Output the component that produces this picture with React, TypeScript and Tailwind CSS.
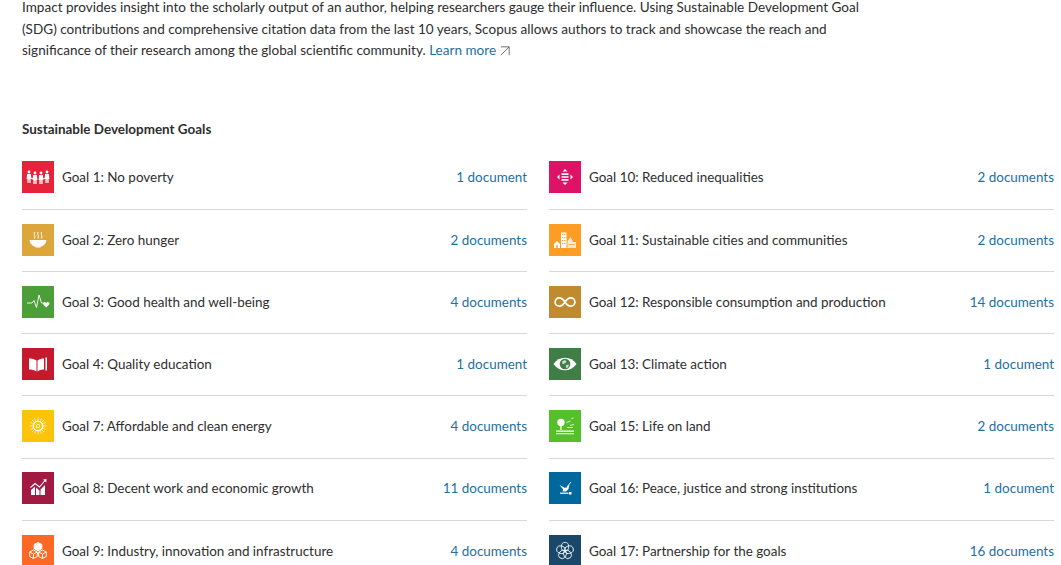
import { FC, ReactNode } from 'react';

const W = 'white';

const Figure: FC<{ x: number; top: number }> = ({ x, top }) => (
  <g>
    <circle cx={x} cy={top} r={1.400} />
    <path d={`M${x - 1.900} ${top + 2}h3.800l.5 5h-.8v4h-1.300v-3.500h-.6v3.500h-1.300v-4h-.8z`} />
  </g>
);

const Poverty = () => (
  <g fill={W}>
    <Figure x={7} top={11} />
    <Figure x={13} top={12} />
    <Figure x={19} top={12} />
    <Figure x={25} top={11} />
    <circle cx={10} cy={17.500} r={0.800} />
    <circle cx={22} cy={17.500} r={0.800} />
  </g>
);

const Hunger = () => (
  <g>
    <path d="M7.500 16h17c-.3 3.800-3.500 6.300-6 6.700v.8h-5v-.8c-2.500-.4-5.700-2.900-6-6.700z" fill={W} />
    <path d="M12.500 8c-1.200 1.600 1.200 3 0 6.500M16 8c-1.200 1.600 1.200 3 0 6.500M19.500 8c-1.200 1.600 1.200 3 0 6.500" stroke={W} strokeWidth={1} fill="none" />
  </g>
);

const Health = () => (
  <g>
    <path d="M5 17h5l2-2.500 2.500 7 2.500-12.500 2.500 8h1.500" stroke={W} strokeWidth={0.900} fill="none" />
    <path d="M24.200 21.500l-3-3c-1.300-1.800 1.700-3.800 3-1.500 1.300-2.300 4.300-.3 3 1.500z" fill={W} />
  </g>
);

const Education = () => (
  <g fill={W}>
    <path d="M7 10.500c2.500 0 5 .6 7.500 2v11c-2.500-1.400-5-2-7.500-2z" />
    <path d="M22 10.500c-2 0-4.500.6-6.500 2v11c2-1.400 4.500-2 6.500-2z" />
    <rect x={23.500} y={9.500} width={1.500} height={13} />
  </g>
);

const Energy = () => (
  <g stroke={W} fill="none">
    <circle cx={16} cy={16} r={4.700} strokeWidth={1.500} />
    <circle cx={16} cy={16} r={1.700} strokeWidth={0.800} />
    <path
      d="M16 7.500v2.800M16 21.700v2.800M7.500 16h2.800M21.700 16h2.800M10 10l2 2M20 20l2 2M22 10l-2 2M12 20l-2 2M12.500 8.300l1 2.300M18.500 21.400l1 2.300M19.500 8.300l-1 2.300M13.500 21.400l-1 2.300M8.300 12.500l2.300 1M21.400 18.500l2.300 1M23.700 12.500l-2.300 1M10.600 18.500l-2.300 1"
      strokeWidth={0.700}
    />
  </g>
);

const Growth = () => (
  <g fill={W}>
    <path d="M9 18l4-3.500v8.500H9zM14 15.500l3.500 3V23H14zM18.500 17.500l4.500-4.500v10h-4.500z" />
    <path d="M8.500 15.500l4.500-4 4.500 3.500 5.500-6.500" stroke={W} strokeWidth={1.100} fill="none" />
    <path d="M21 7.500l3.500-.5-.2 3.500z" />
  </g>
);

const Industry = () => (
  <g stroke={W} strokeWidth={1} fill="none" strokeLinejoin="round">
    <path d="M16 7.500l3.800 2v4.200l-3.800 2-3.800-2V9.500z" fill={W} />
    <path d="M11.500 15l3.800 2v4.500l-3.800 2-3.800-2V17z" />
    <path d="M20.500 15l3.800 2v4.500l-3.800 2-3.800-2V17z" />
    <path d="M7.700 17l3.800 2 3.800-2M16.700 17l3.800 2 3.800-2M11.500 19v4.500M20.500 19v4.500" />
  </g>
);

const Inequalities = () => (
  <g fill={W}>
    <path d="M12.500 12.300h7v1.700h-7zM12.500 15.150h7v1.700h-7zM12.500 18h7v1.700h-7z" />
    <path d="M16 8l2.500 2.500h-5zM16 24l-2.500-2.500h5zM8 16l2.500-2.500v5zM24 16l-2.500-2.500v5z" />
  </g>
);

const Cities = () => (
  <g fill={W}>
    <path d="M5 24v-4l3-3 3 3v4zM12 24V8.500h5.500V24z" />
    <path d="M18.500 24v-7l3-4 2 3.500v1.500h3.500v6z" opacity={0.8} />
    <g fill="#fd9d24">
      <rect x={13.200} y={10} width={1.200} height={1.200} />
      <rect x={15.200} y={10} width={1.200} height={1.200} />
      <rect x={13.200} y={13} width={1.200} height={1.200} />
      <rect x={15.200} y={13} width={1.200} height={1.200} />
      <rect x={13.200} y={16} width={1.200} height={1.200} />
      <rect x={15.200} y={16} width={1.200} height={1.200} />
      <rect x={13.200} y={19} width={1.200} height={1.200} />
      <rect x={15.200} y={19} width={1.200} height={1.200} />
      <rect x={19.500} y={20} width={6.500} height={0.700} />
      <rect x={7.300} y={21} width={1.400} height={3} />
    </g>
  </g>
);

const Consumption = () => (
  <path
    d="M16 16c-1.800-2.800-3.500-4.200-5.700-4.200a4.200 4.200 0 0 0 0 8.400c2.200 0 3.900-1.400 5.700-4.200 1.800-2.800 3.500-4.200 5.700-4.200a4.200 4.200 0 0 1 0 8.400c-2.200 0-3.900-1.400-5.700-4.200z"
    stroke={W}
    strokeWidth={1.700}
    fill="none"
  />
);

const Climate = () => (
  <g>
    <path d="M4.500 16c3-4.200 7-6.300 11.500-6.300S24.500 11.800 27.500 16c-3 4.200-7 6.300-11.500 6.300S7.500 20.200 4.500 16z" fill={W} />
    <circle cx={16} cy={16} r={5.300} fill="#3f7e44" />
    <path d="M13 13.500l3-1.500 1.500 1.500-1.500 2-2.500.5zM17 17l3-.5-1 3-2 .5z" fill={W} opacity={0.75} />
  </g>
);

const Land = () => (
  <g fill={W}>
    <circle cx={12} cy={12.500} r={3.700} />
    <rect x={11.400} y={14} width={1.200} height={6} />
    <path d="M7 20.500h18v1.300H7zM7 23.300h18v1H7z" />
    <path d="M17.500 12.500l4-1.500M21 15.500l4-1M22.500 8.500l2-.5M18 17.500h6" stroke={W} strokeWidth={0.800} />
  </g>
);

const Peace = () => (
  <g fill={W}>
    <path d="M10.500 13l5 2.800 2.300-.4 2.700-2.900-1 4.500-2.500 2.600h-3.500l.5-2.300z" />
    <path d="M18 15l4-5" stroke={W} strokeWidth={0.900} />
    <path d="M11 20.600h8.500v1.200H11z" />
    <rect x={20} y={20} width={2.500} height={2.500} />
  </g>
);

const Partnership = () => (
  <g stroke={W} strokeWidth={0.800} fill="none">
    {[0, 72, 144, 216, 288].map((a) => (
      <ellipse key={a} cx={16} cy={11.800} rx={3.700} ry={4.400} transform={`rotate(${a} 16 16)`} />
    ))}
  </g>
);

const GoalIcon: FC<{ bg: string; children: ReactNode }> = ({ bg, children }) => (
  <svg viewBox="0 0 32 32" className="w-8 h-8 shrink-0" aria-hidden="true">
    <rect width={32} height={32} fill={bg} />
    {children}
  </svg>
);

type Goal = { title: string; docs: string; bg: string; icon: ReactNode };

const leftGoals: Goal[] = [
  { title: 'Goal 1: No poverty', docs: '1 document', bg: '#e5243b', icon: <Poverty /> },
  { title: 'Goal 2: Zero hunger', docs: '2 documents', bg: '#dda63a', icon: <Hunger /> },
  { title: 'Goal 3: Good health and well-being', docs: '4 documents', bg: '#4c9f38', icon: <Health /> },
  { title: 'Goal 4: Quality education', docs: '1 document', bg: '#c5192d', icon: <Education /> },
  { title: 'Goal 7: Affordable and clean energy', docs: '4 documents', bg: '#fcc30b', icon: <Energy /> },
  { title: 'Goal 8: Decent work and economic growth', docs: '11 documents', bg: '#a21942', icon: <Growth /> },
  { title: 'Goal 9: Industry, innovation and infrastructure', docs: '4 documents', bg: '#fd6925', icon: <Industry /> },
];

const rightGoals: Goal[] = [
  { title: 'Goal 10: Reduced inequalities', docs: '2 documents', bg: '#dd1367', icon: <Inequalities /> },
  { title: 'Goal 11: Sustainable cities and communities', docs: '2 documents', bg: '#fd9d24', icon: <Cities /> },
  { title: 'Goal 12: Responsible consumption and production', docs: '14 documents', bg: '#bf8b2e', icon: <Consumption /> },
  { title: 'Goal 13: Climate action', docs: '1 document', bg: '#3f7e44', icon: <Climate /> },
  { title: 'Goal 15: Life on land', docs: '2 documents', bg: '#56c02b', icon: <Land /> },
  { title: 'Goal 16: Peace, justice and strong institutions', docs: '1 document', bg: '#00689d', icon: <Peace /> },
  { title: 'Goal 17: Partnership for the goals', docs: '16 documents', bg: '#19486a', icon: <Partnership /> },
];

const GoalList: FC<{ goals: Goal[] }> = ({ goals }) => (
  <ul>
    {goals.map((goal) => (
      <li key={goal.title} className="flex items-center h-[62.2px] pb-[1.4px] border-b border-[#d8d8d8] last:border-b-0">
        <GoalIcon bg={goal.bg}>{goal.icon}</GoalIcon>
        <span className="ml-2 flex-1 text-[#2e2e2e]">{goal.title}</span>
        <a className="text-[#1f6f9f]">{goal.docs}</a>
      </li>
    ))}
  </ul>
);

const App: FC = () => (
  <div className="h-[565px] w-[1061px] overflow-hidden bg-white font-['Lato',sans-serif] text-[13.45px] text-[#2e2e2e]">
    <div className="pl-[22px] pr-[7px]">
      <p className="w-[850px] h-[150.6px] text-[13.55px] leading-[21.6px] -mt-[3px]">
        Impact provides insight into the scholarly output of an author, helping researchers gauge their influence. Using
        Sustainable Development Goal (SDG) contributions and comprehensive citation data from the last 10 years, Scopus
        allows authors to track and showcase the reach and significance of their research among the global scientific
        community.{' '}
        <a className="text-[#1f6f9f] whitespace-nowrap">
          Learn more
          <svg viewBox="0 0 12 12" className="inline-block w-[10px] h-[10px] ml-1 align-[-1px]" fill="none" stroke="#555" strokeWidth={1}>
            <path d="M1 1h10v10M11 1L1 11" />
          </svg>
        </a>
      </p>
      <h2 className="-mt-[29px] h-[29px] font-bold leading-[20px]">Sustainable Development Goals</h2>
      <div className="grid grid-cols-2 gap-x-[22px]">
        <GoalList goals={leftGoals} />
        <GoalList goals={rightGoals} />
      </div>
    </div>
  </div>
);

export default App;
